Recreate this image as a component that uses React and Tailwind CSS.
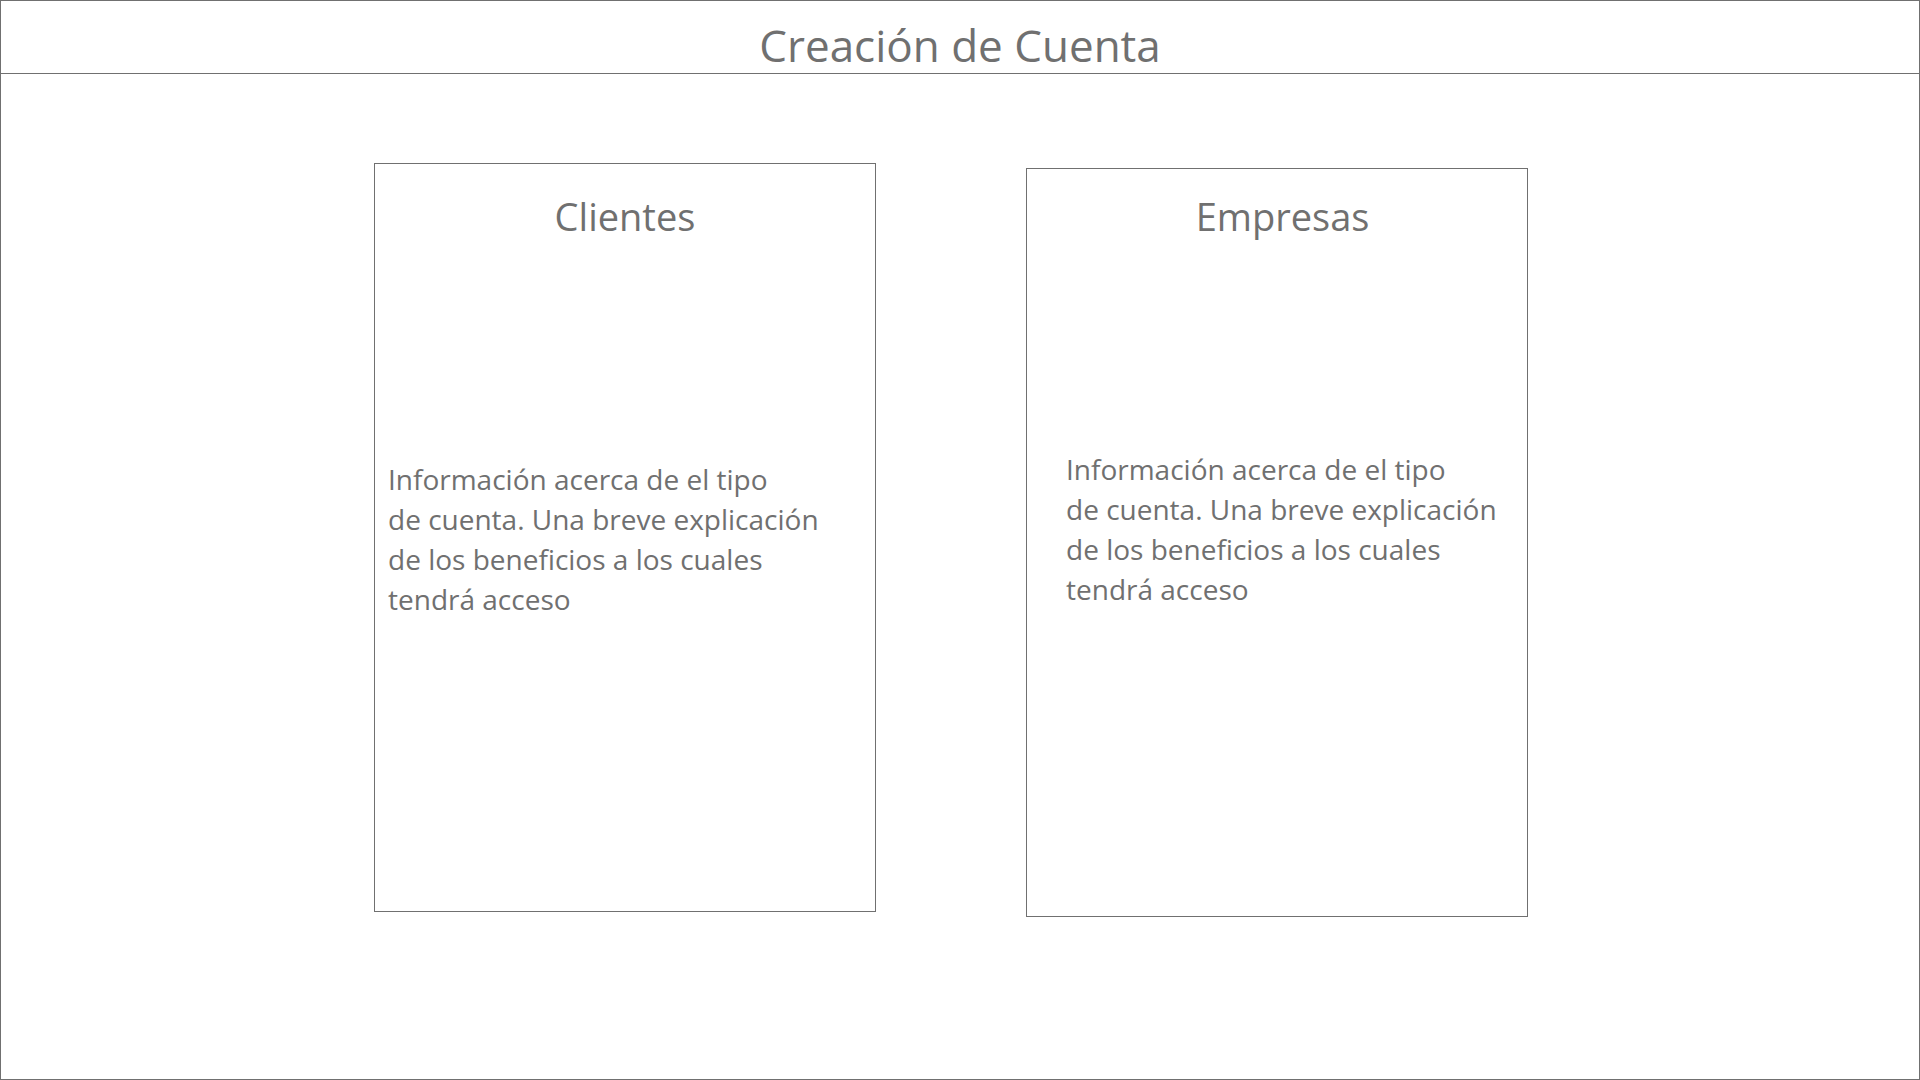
const info = [
  "Información acerca de el tipo",
  "de cuenta. Una breve explicación",
  "de los beneficios a los cuales",
  "tendrá acceso",
];

function Card({ title, className, titleClass, textClass }) {
  return (
    <section className={`w-full max-w-[502px] min-h-[749px] border border-[#707070] ${className}`}>
      <h2 className={`text-center text-[38px] leading-[54px] ${titleClass}`}>{title}</h2>
      <p className={`text-[28px] leading-10 ${textClass}`}>
        {info.map((line) => (
          <span key={line} className="block">{line}</span>
        ))}
      </p>
    </section>
  );
}

export default function App() {
  return (
    <div className="min-h-screen border border-[#707070] bg-white font-['Open_Sans','Noto_Sans',sans-serif] text-[#707070]">
      <header className="h-[73px] border-b border-[#707070] pt-3 text-center">
        <h1 className="text-[44px] leading-[64px]">Creación de Cuenta</h1>
      </header>
      <main className="flex items-start justify-center gap-[150px] pr-[18px] pt-[89px]">
        <Card title="Clientes" className="" titleClass="mt-[25px]" textClass="mt-[216px] pl-[13px]" />
        <Card title="Empresas" className="mt-[5px]" titleClass="mt-5 pl-[11px]" textClass="mt-[206px] pl-[39px]" />
      </main>
    </div>
  );
}
